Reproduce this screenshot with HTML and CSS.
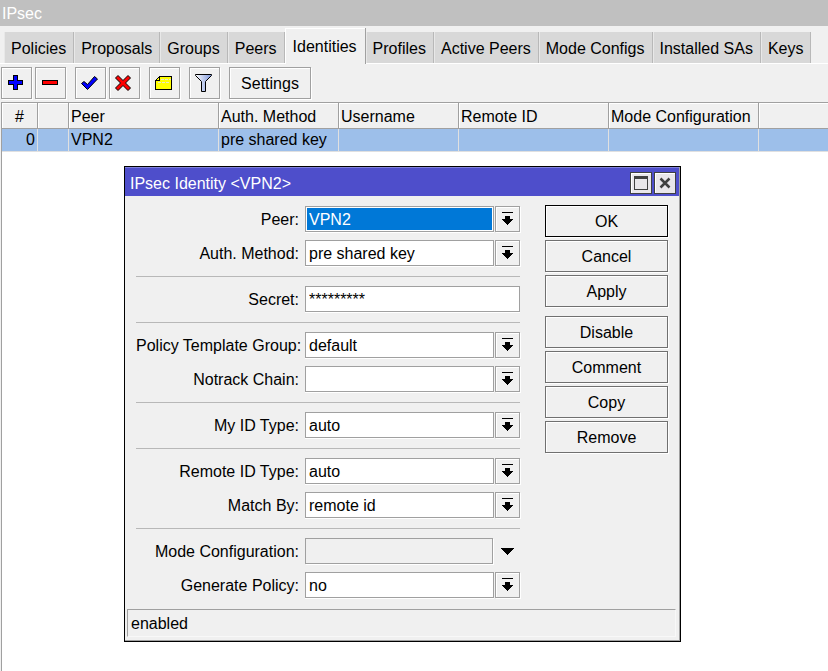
FILE: index.html
```html
<!DOCTYPE html>
<html lang="en">
<head>
<meta charset="utf-8">
<title>IPsec</title>
<link rel="stylesheet" href="styles.css">
</head>
<body>
<svg class="defs" aria-hidden="true">
  <symbol id="drop" viewBox="0 0 11 14" shape-rendering="crispEdges">
    <path d="M0 0h11v1H0zM3 4h5v3h3v1h-1v1H9v1H8v1H7v1H6v1H5v-1H4v-1H3v-1H2V9H1V8H0V7h3z"/>
  </symbol>
</svg>
<header class="window-title">IPsec</header>
<nav class="tabs">
  <button class="tab">Policies</button>
  <button class="tab">Proposals</button>
  <button class="tab">Groups</button>
  <button class="tab">Peers</button>
  <button class="tab active">Identities</button>
  <button class="tab">Profiles</button>
  <button class="tab">Active Peers</button>
  <button class="tab">Mode Configs</button>
  <button class="tab">Installed SAs</button>
  <button class="tab">Keys</button>
</nav>
<div class="toolbar">
  <div class="tool-group">
    <button class="tool" aria-label="Add"><svg width="19" height="18" viewBox="0 0 19 18" shape-rendering="crispEdges"><path d="M6 1h5v5h5v5h-5v5H6v-5H1V6h5z"/><path d="M7 2h3v5h5v3h-5v5H7v-5H2V7h5z" fill="#00f"/></svg></button>
    <button class="tool" aria-label="Remove"><svg width="19" height="18" viewBox="0 0 19 18" shape-rendering="crispEdges"><path d="M1 6h16v5H1z"/><path d="M2 7h14v3H2z" fill="#f00"/></svg></button>
  </div>
  <div class="tool-group">
    <button class="tool" aria-label="Enable"><svg width="19" height="18" viewBox="0 0 19 18"><path d="M.5 9.500L3 7.500 6.500 10.500 13.500 2.500 16.500 5 6.500 15.500z" fill="#00f" stroke="#000"/></svg></button>
    <button class="tool" aria-label="Disable"><svg width="19" height="18" viewBox="0 0 19 18"><path d="M3 1.500L8 6.500 13 1.500 15.500 4 10.500 9 15.500 14 13 16.500 8 11.500 3 16.500.5 14 5.500 9 .5 4z" fill="#f00" stroke="#000"/></svg></button>
  </div>
  <button class="tool" aria-label="Comment"><svg width="19" height="18" viewBox="0 0 19 18" shape-rendering="crispEdges"><path d="M4.500 2.500h12v13H.500v-9z" fill="#ff0" stroke="#000"/><path d="M.500 6.500h4v-4" fill="none" stroke="#000"/><path d="M6 5.500h10M3 8.500h12" stroke="#e8e8c8" stroke-dasharray="3 1"/></svg></button>
  <button class="tool" aria-label="Filter"><svg width="19" height="18" viewBox="0 0 19 18"><defs><linearGradient id="steel"><stop offset="0" stop-color="#fff"/><stop offset="1" stop-color="#7d96dc"/></linearGradient></defs><path d="M.500.500h16v1l-6 6v10h-4v-10l-6-6z" fill="url(#steel)" stroke="#000"/></svg></button>
  <button class="tool settings">Settings</button>
</div>
<main class="list">
  <table>
    <colgroup><col class="c-num"><col class="c-flag"><col class="c-wide"><col class="c-mid"><col class="c-mid"><col class="c-wide"><col class="c-wide"><col></colgroup>
    <thead><tr><th>#</th><th></th><th>Peer</th><th>Auth. Method</th><th>Username</th><th>Remote ID</th><th>Mode Configuration</th><th></th></tr></thead>
    <tbody><tr><td>0</td><td></td><td>VPN2</td><td>pre shared key</td><td></td><td></td><td></td><td></td></tr></tbody>
  </table>
</main>

<section class="dialog" role="dialog" aria-labelledby="dialog-title">
  <header class="dialog-title">
    <span id="dialog-title">IPsec Identity &lt;VPN2&gt;</span>
    <button class="win" aria-label="Maximize"><svg width="14" height="14" viewBox="0 0 14 14" shape-rendering="crispEdges"><path d="M0 0h14v14H0z" fill="#404040"/><path d="M1 3h12v10H1z" fill="#e9e6ea"/></svg></button>
    <button class="win" aria-label="Close"><svg width="14" height="14" viewBox="0 0 14 14"><path d="M2.500 2.500l9 9M11.500 2.500l-9 9" stroke="#404040" stroke-width="2.500"/></svg></button>
  </header>
  <div class="dialog-body">
    <form class="form">
      <div class="row"><label for="peer">Peer:</label><select id="peer" class="selected"><option>VPN2</option></select><button type="button" class="drop" aria-label="Open Peer"><svg width="11" height="14"><use href="#drop"/></svg></button></div>
      <div class="row"><label for="auth">Auth. Method:</label><select id="auth"><option>pre shared key</option></select><button type="button" class="drop" aria-label="Open Auth. Method"><svg width="11" height="14"><use href="#drop"/></svg></button></div>
      <hr>
      <div class="row"><label for="secret">Secret:</label><input id="secret" type="text" value="*********"></div>
      <hr>
      <div class="row"><label for="group">Policy Template Group:</label><select id="group"><option>default</option></select><button type="button" class="drop" aria-label="Open Policy Template Group"><svg width="11" height="14"><use href="#drop"/></svg></button></div>
      <div class="row"><label for="chain">Notrack Chain:</label><select id="chain"><option></option></select><button type="button" class="drop" aria-label="Open Notrack Chain"><svg width="11" height="14"><use href="#drop"/></svg></button></div>
      <hr>
      <div class="row"><label for="myid">My ID Type:</label><select id="myid"><option>auto</option></select><button type="button" class="drop" aria-label="Open My ID Type"><svg width="11" height="14"><use href="#drop"/></svg></button></div>
      <hr>
      <div class="row"><label for="remoteid">Remote ID Type:</label><select id="remoteid"><option>auto</option></select><button type="button" class="drop" aria-label="Open Remote ID Type"><svg width="11" height="14"><use href="#drop"/></svg></button></div>
      <div class="row"><label for="match">Match By:</label><select id="match"><option>remote id</option></select><button type="button" class="drop" aria-label="Open Match By"><svg width="11" height="14"><use href="#drop"/></svg></button></div>
      <hr>
      <div class="row"><label for="mode">Mode Configuration:</label><select id="mode" class="unset"><option></option></select><button type="button" class="drop bare" aria-label="Open Mode Configuration"><svg width="13" height="7" viewBox="0 0 13 7" shape-rendering="crispEdges"><path d="M0 0h13v1h-1v1h-1v1h-1v1H9v1H8v1H7v1H6V6H5V5H4V4H3V3H2V2H1V1H0z"/></svg></button></div>
      <div class="row"><label for="policy">Generate Policy:</label><select id="policy"><option>no</option></select><button type="button" class="drop" aria-label="Open Generate Policy"><svg width="11" height="14"><use href="#drop"/></svg></button></div>
    </form>
    <div class="actions">
      <div class="action-group">
        <button class="action default">OK</button>
        <button class="action">Cancel</button>
        <button class="action">Apply</button>
      </div>
      <div class="action-group">
        <button class="action">Disable</button>
        <button class="action">Comment</button>
        <button class="action">Copy</button>
        <button class="action">Remove</button>
      </div>
    </div>
  </div>
  <footer class="status">enabled</footer>
</section>
</body>
</html>
```
FILE: styles.css
```css
* { box-sizing: border-box; }
body {
  margin: 0;
  min-height: 100vh;
  display: flex;
  flex-direction: column;
  background: #f0f0f0;
  color: #000;
  font: 16px/20px "Liberation Sans", Arial, sans-serif;
}
button, input, select { font: inherit; color: inherit; margin: 0; border-radius: 0; }
button { padding: 0; background: #f0f0f0; }
svg { display: block; }
.defs { position: absolute; width: 0; height: 0; }

.window-title { height: 26px; padding: 4px 2px 2px; background: #c0c0c0; color: #fff; }

.tabs {
  display: flex;
  align-items: flex-end;
  height: 38px;
  padding-left: 4px;
  box-shadow: inset 0 -1px #fff;
}
.tab {
  height: 31px;
  margin-bottom: 1px;
  padding: 2px 7px 0;
  border: 0;
  border-right: 1px solid #b8b8b8;
  background: #d8d8d8;
  box-shadow: inset 1px 0 #e8e8e8;
  white-space: nowrap;
}
.tab.active {
  height: 36px;
  margin-bottom: 0;
  padding: 2px 8px 0;
  border-color: #a0a0a0;
  background: #f0f0f0;
  box-shadow: inset 1px 1px #fff;
}

.toolbar { display: flex; gap: 9px; height: 38px; padding: 3px 1px; }
.tool-group { display: flex; gap: 3px; }
.tool {
  display: flex;
  align-items: center;
  justify-content: center;
  width: 31px;
  height: 32px;
  border: 1px solid #a0a0a0;
  box-shadow: 1px 1px #fff, inset 1px 1px #fff;
}
.tool.settings { width: 82px; padding-top: 2px; }

.list { flex: 1; margin-left: 1px; border: solid #a0a0a0; border-width: 1px 0 0 1px; background: #fff; }
table { width: 100%; table-layout: fixed; border-collapse: separate; border-spacing: 0; }
.c-num { width: 36px; }
.c-flag { width: 31px; }
.c-wide { width: 150px; }
.c-mid { width: 120px; }
th, td { padding: 0 2px; text-align: left; font-weight: normal; white-space: nowrap; }
th { height: 26px; padding-top: 2px; border: solid #a0a0a0; border-width: 0 1px 1px 0; background: #f0f0f0; box-shadow: inset 1px 1px #fff; }
td { height: 23px; border: solid #e0e0e0; border-width: 0 1px 1px 0; background: #9dbfea; }
th:first-child { text-align: center; }
td:first-child { text-align: right; }
th:last-child, td:last-child { border-right: 0; }

.dialog {
  position: absolute;
  left: 124px;
  top: 166px;
  width: 557px;
  border: 1px solid #000;
  background: #f0f0f0;
  box-shadow: inset -1px -1px #a0a0a0;
}
.dialog-title {
  display: flex;
  align-items: center;
  gap: 2px;
  height: 29px;
  margin-right: 1px;
  padding: 2px 3px 0 5px;
  border-top: 1px solid #8080dc;
  background: #4e4ecb;
  color: #fff;
}
.dialog-title span { flex: 1; padding-top: 2px; }
.win {
  display: flex;
  align-items: center;
  justify-content: center;
  width: 22px;
  height: 22px;
  border: 1px solid #404040;
  background: #e9e6ea;
  box-shadow: inset 1px 1px #fff;
}
.dialog-body { display: flex; gap: 25px; padding: 9px 12px 11px 11px; }
.form { flex: 1; display: flex; flex-direction: column; gap: 8px; padding-top: 1px; }
.row { display: flex; gap: 1px; height: 26px; align-items: center; }
.row label { width: 163px; margin-right: 5px; padding-top: 2px; text-align: right; white-space: nowrap; }
.row input, .row select {
  flex: 1;
  min-width: 0;
  height: 26px;
  padding: 2px 3px 0;
  border: 1px solid #a0a0a0;
  background: #fff;
  box-shadow: 0 1px #fff;
  outline: 0;
  appearance: none;
}
.row .selected { background: #0078d7; color: #fff; box-shadow: inset 0 0 0 1px #fff, 0 1px #fff; }
.row .unset { background: #f0f0f0; box-shadow: 1px 1px #fff; }
.drop {
  display: flex;
  align-items: center;
  justify-content: center;
  width: 25px;
  height: 26px;
  border: 1px solid #a0a0a0;
  box-shadow: 1px 1px #fff, inset 1px 1px #fff;
}
.bare { width: 26px; border-color: transparent; background: none; box-shadow: none; }
hr { width: 100%; height: 1px; margin: 2px 0 1px; border: 0; background: #b8b8b8; }

.actions { display: flex; flex-direction: column; gap: 9px; width: 123px; }
.action-group { display: flex; flex-direction: column; gap: 3px; }
.action { height: 32px; padding-top: 2px; border: 1px solid #707070; box-shadow: 1px 1px #fff, inset 1px 1px #fff; }
.action.default { border-color: #000; }

.status {
  height: 28px;
  margin: 0 4px 4px 2px;
  padding: 4px 3px;
  border: 1px solid;
  border-color: #a0a0a0 #f8f8f8 #f8f8f8 #a0a0a0;
}
```
